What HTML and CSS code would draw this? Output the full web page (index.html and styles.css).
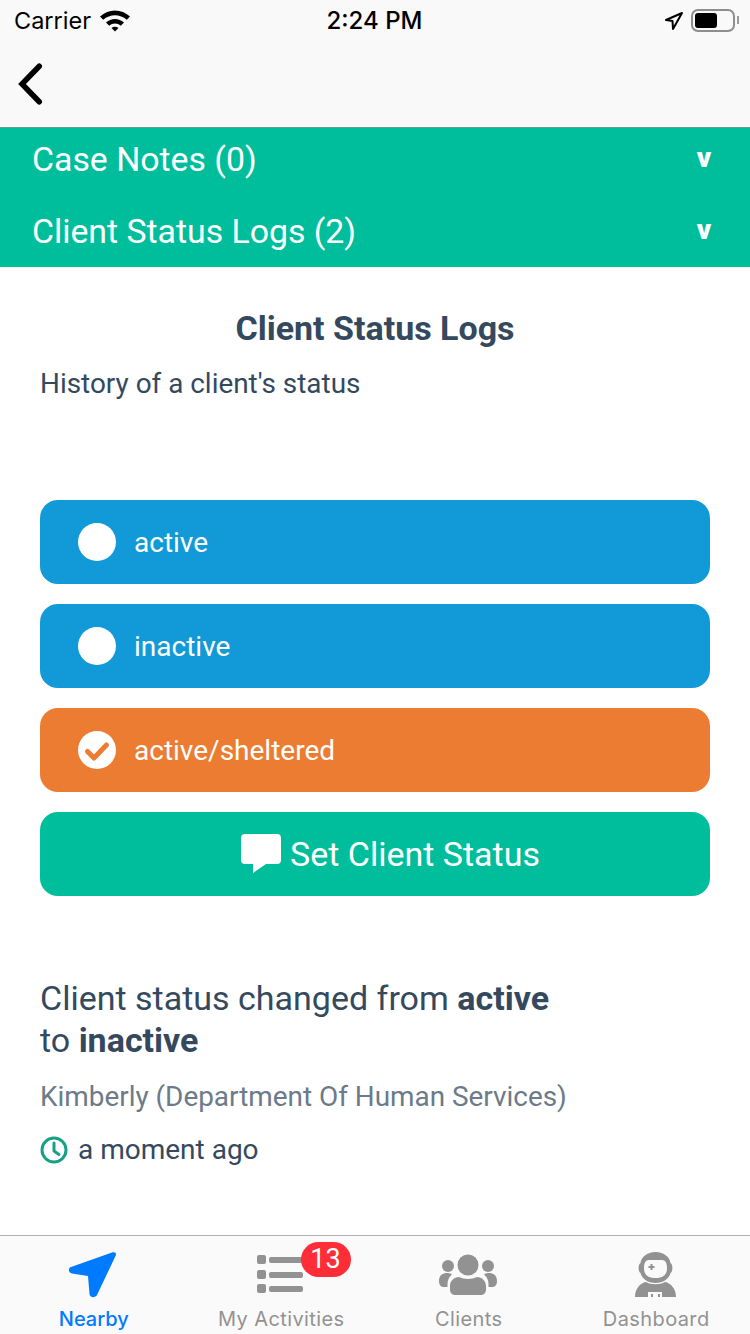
FILE: index.html
```html
<!DOCTYPE html>
<html lang="en">
<head>
  <meta charset="UTF-8">
  <meta name="viewport" content="width=device-width, initial-scale=1.0">
  <link rel="stylesheet" href="styles.css">
</head>
<body>
  <div class="screen">
    <header class="top-bar">
      <div class="status-bar">
        <div class="status-left">
          <span class="carrier">Carrier</span>
          <svg class="wifi" width="32" height="24" viewBox="0 0 32 24">
            <path d="M1 8.500C9.500 .5 22.500 .5 31 8.500L27.800 11.800C21 5.700 11 5.700 4.200 11.800Z"/>
            <path d="M7 14.500C12.300 9.800 19.700 9.800 25 14.500L21.800 17.700C18.300 14.800 13.700 14.800 10.200 17.700Z"/>
            <path d="M12.500 20C14.700 18.300 17.300 18.300 19.500 20L16 23.500Z"/>
          </svg>
        </div>
        <span class="clock">2:24 PM</span>
        <div class="status-right">
          <svg class="loc" width="20" height="22" viewBox="0 0 20 22">
            <path d="M18 4L2 11L8.500 12L9 20Z" fill="none" stroke="#000" stroke-width="2" stroke-linejoin="round"/>
          </svg>
          <div class="battery"><div class="battery-level"></div></div>
          <div class="battery-cap"></div>
        </div>
      </div>
      <div class="nav-bar">
        <svg width="30" height="46" viewBox="0 0 30 46">
          <path d="M25.250 5.250L8 23L25.250 40.750" fill="none" stroke="#000" stroke-width="5.500" stroke-linecap="round"/>
        </svg>
      </div>
    </header>

    <section class="accordion">
      <div class="accordion-row"><span>Case Notes (0)</span><span class="chevron">v</span></div>
      <div class="accordion-row"><span>Client Status Logs (2)</span><span class="chevron">v</span></div>
    </section>

    <main class="content">
      <h1 class="title">Client Status Logs</h1>
      <p class="subtitle">History of a client's status</p>

      <div class="options">
        <div class="option option-blue"><span class="radio"></span>active</div>
        <div class="option option-blue"><span class="radio"></span>inactive</div>
        <div class="option option-orange">
          <span class="radio">
            <svg width="38" height="38" viewBox="0 0 38 38">
              <path d="M9.500 20.500L16 27L28.500 14" fill="none" stroke="#ec7c32" stroke-width="5" stroke-linecap="round" stroke-linejoin="round"/>
            </svg>
          </span>
          active/sheltered
        </div>
        <div class="option option-green">
          <svg class="chat" width="40" height="40" viewBox="0 0 40 40">
            <path d="M4 0H36A4 4 0 0 1 40 4V26A4 4 0 0 1 36 30H25L12 39V30H4A4 4 0 0 1 0 26V4A4 4 0 0 1 4 0Z" fill="#fff"/>
          </svg>
          Set Client Status
        </div>
      </div>

      <div class="log">
        <p class="log-text">Client status changed from <b>active</b><br>to <b>inactive</b></p>
        <p class="log-author">Kimberly (Department Of Human Services)</p>
        <p class="log-time">
          <svg width="28" height="28" viewBox="0 0 28 28">
            <circle cx="14" cy="14" r="12" fill="none" stroke="#16a085" stroke-width="3"/>
            <path d="M14 7V15L19 18.500" fill="none" stroke="#16a085" stroke-width="3" stroke-linecap="round" stroke-linejoin="round"/>
          </svg>
          a moment ago
        </p>
      </div>
    </main>

    <nav class="tab-bar">
      <div class="tab tab-active">
        <svg class="tab-icon" width="50" height="48" viewBox="0 0 50 48">
          <path d="M43 2.500L2 17C-1 18 -1 23 3 23.500L19 26L20.500 44C21 48 26 48 28 45L46.500 6C48 3 46 1.500 43 2.500Z" fill="#007aff"/>
        </svg>
        <span>Nearby</span>
      </div>
      <div class="tab">
        <svg class="tab-icon" width="50" height="48" viewBox="0 0 50 48">
          <rect x="1" y="5" width="9" height="9" rx="2"/><rect x="13" y="7" width="34" height="6" rx="2"/>
          <rect x="1" y="20" width="9" height="9" rx="2"/><rect x="13" y="22" width="34" height="6" rx="2"/>
          <rect x="1" y="34" width="9" height="9" rx="2"/><rect x="13" y="36" width="34" height="6" rx="2"/>
        </svg>
        <span class="badge">13</span>
        <span>My Activities</span>
      </div>
      <div class="tab">
        <svg class="tab-icon" width="60" height="48" viewBox="0 0 60 48">
          <circle cx="29" cy="15" r="10.500"/><circle cx="9" cy="16" r="6"/><circle cx="49" cy="16" r="6"/>
          <path d="M0 31C0 25 4 23 8 23C10 23 12 23.500 13 24.500C10 27 8.500 30 8.500 34V37H5C2 37 0 35 0 31Z"/>
          <path d="M58 31C58 25 54 23 50 23C48 23 46 23.500 45 24.500C48 27 49.500 30 49.500 34V37H53C56 37 58 35 58 31Z"/>
          <path d="M11 39V36C11 31 15 27 20 27C25 29.500 33 29.500 38 27C43 27 47 31 47 36V39C47 43 45 45 41 45H17C13 45 11 43 11 39Z"/>
        </svg>
        <span>Clients</span>
      </div>
      <div class="tab">
        <svg class="tab-icon" width="44" height="48" viewBox="0 0 44 48">
          <path fill-rule="evenodd" d="M21.500 2C30 2 36 7.500 36.500 13C39 14 39 22 36.500 23C35 29 29 33 21.500 33C14 33 8 29 6.500 23C4 22 4 14 6.500 13C7 7.500 13 2 21.500 2ZM15 10C11.500 10 10 13 10 18C10 25 14 28 21.500 28C29 28 33 25 33 18C33 13 31.500 10 28 10Z"/>
          <path d="M16.500 14H18.500V16H20.500V18H18.500V20H16.500V18H14.500V16H16.500Z"/>
          <path fill-rule="evenodd" d="M1 47C1 39 6 33 12 32C17 35 26 35 31 32C37 33 42 39 42 47ZM14 42V47H28V42ZM17 44V47H19V44ZM24 44V47H26V44Z"/>
        </svg>
        <span>Dashboard</span>
      </div>
    </nav>
  </div>
</body>
</html>
```

FILE: styles.css
```css
* {
  box-sizing: border-box;
}

body {
  margin: 0;
  font-family: Roboto, Arial, sans-serif;
  background-color: #fff;
}

p, h1 {
  margin: 0;
}

.screen {
  width: 750px;
  height: 1334px;
  display: flex;
  flex-direction: column;
  overflow: hidden;
}

.top-bar {
  height: 128px;
  background-color: #f9f9f9;
  border-bottom: 1px solid #6e9a90;
}

.status-bar {
  height: 40px;
  padding: 0 11px 0 14px;
  display: grid;
  grid-template-columns: 1fr auto 1fr;
  align-items: center;
  font-family: Inter, Arial, sans-serif;
  font-size: 23.5px;
  color: #000;
}

.status-left {
  display: flex;
  align-items: center;
  gap: 8px;
}

.status-right {
  display: flex;
  align-items: center;
  justify-content: flex-end;
}

.clock {
  margin-right: 4px;
  font-size: 24px;
  font-weight: 500;
}

.loc {
  margin-right: 7px;
}

.battery {
  width: 44px;
  height: 23px;
  border: 2px solid #8e8e8e;
  border-radius: 7px;
  padding: 2px;
}

.battery-level {
  width: 22px;
  height: 15px;
  background-color: #000;
  border-radius: 3px;
}

.battery-cap {
  width: 2px;
  height: 8px;
  margin-left: 2px;
  background-color: #9a9a9a;
}

.nav-bar {
  height: 87px;
  padding-left: 14px;
  display: flex;
  align-items: center;
}

.accordion {
  height: 139px;
  padding: 14px 32px 17px 32px;
  display: flex;
  flex-direction: column;
  gap: 36px;
  background-color: #00be9b;
  color: #fff;
}

.accordion-row {
  height: 36px;
  display: flex;
  justify-content: space-between;
  align-items: center;
  font-size: 33.8px;
  line-height: 36px;
}

.chevron {
  width: 22px;
  padding-bottom: 4px;
  margin-right: 3px;
  font-size: 28px;
  font-weight: 900;
  text-align: center;
}

.content {
  flex: 1;
  padding: 41px 40px 0 40px;
  color: #34495e;
}

.title {
  font-size: 34px;
  line-height: 40px;
  font-weight: 700;
  text-align: center;
}

.subtitle {
  margin-top: 20px;
  font-size: 27.9px;
  line-height: 32px;
}

.options {
  margin-top: 100px;
  display: flex;
  flex-direction: column;
  gap: 20px;
}

.option {
  height: 84px;
  padding-left: 38px;
  display: flex;
  align-items: center;
  border-radius: 18px;
  font-size: 28px;
  color: #fff;
}

.option-blue {
  background-color: #1199d8;
}

.option-orange {
  background-color: #ec7c32;
}

.option-green {
  padding-left: 31px;
  justify-content: center;
  gap: 9px;
  background-color: #00be9b;
  font-size: 34px;
}

.radio {
  width: 38px;
  height: 38px;
  margin-right: 18px;
  display: flex;
  align-items: center;
  justify-content: center;
  background-color: #fff;
  border-radius: 50%;
}

.log {
  margin-top: 81px;
}

.log-text {
  font-size: 34px;
  line-height: 42px;
}

.log-author {
  margin-top: 18px;
  font-size: 27.9px;
  line-height: 36px;
  color: #6c7a89;
}

.log-time {
  margin-top: 17px;
  display: flex;
  align-items: center;
  gap: 10px;
  font-size: 28px;
  line-height: 36px;
}

.tab-bar {
  height: 99px;
  display: grid;
  grid-template-columns: repeat(4, 1fr);
  background-color: #fafafa;
  border-top: 1px solid #b2b2b2;
}

.tab {
  position: relative;
  padding-top: 14px;
  display: flex;
  flex-direction: column;
  align-items: center;
  font-family: Inter, Arial, sans-serif;
  font-size: 20px;
  letter-spacing: 0.4px;
  color: #929292;
}

.tab-active {
  color: #007aff;
  font-weight: 500;
  letter-spacing: 0;
}

.tab-icon {
  fill: #929292;
  margin-bottom: 9px;
}

.badge {
  position: absolute;
  top: 6px;
  left: 113px;
  min-width: 50px;
  height: 35px;
  padding: 0 8px;
  background-color: #ff2d37;
  border-radius: 18px;
  color: #fff;
  font-family: Roboto, Arial, sans-serif;
  font-size: 27px;
  line-height: 35px;
  letter-spacing: 0;
  text-align: center;
}
```
